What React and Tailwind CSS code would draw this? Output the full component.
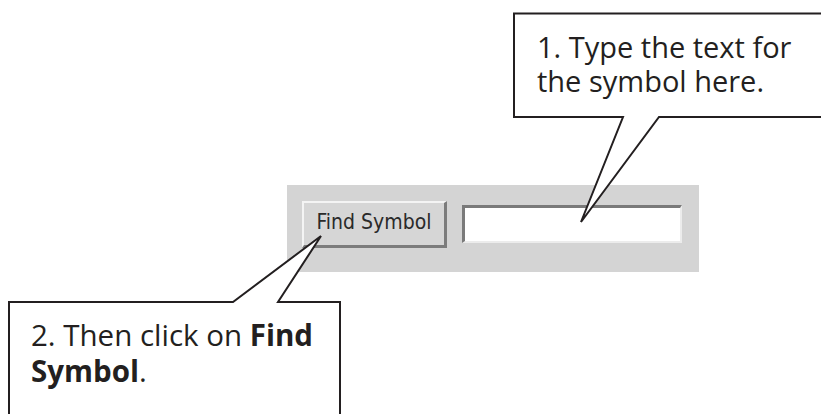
export default function App() {
  return (
    <div className="relative w-[821px] h-[414px] overflow-hidden bg-white">
      {/* toolbar strip */}
      <div className="ml-[287px] pt-[185px]">
        <div className="flex items-start w-[412px] h-[87px] bg-[#d4d4d4] pl-[15px] pt-[16px]">
          <div className="flex items-center justify-center w-[145px] h-[47px] bg-[#d6d6d6] border-t-2 border-l-2 border-b-[3px] border-r-[3px] border-t-[#f4f4f4] border-l-[#f4f4f4] border-b-[#7c7c7c] border-r-[#7c7c7c] pb-[2px] text-[21px] text-[#2a2a2a] font-['DejaVu_Sans_Condensed','Liberation_Sans',sans-serif]">
            Find Symbol
          </div>
          <div className="ml-[15px] mt-[4px] w-[220px] h-[38px] bg-white border-t-[3px] border-l-[3px] border-b-2 border-r-2 border-t-[#7a7a7a] border-l-[#7a7a7a] border-b-[#ececec] border-r-[#ececec]" />
        </div>
      </div>

      {/* callout outlines */}
      <svg className="absolute inset-0" width="821" height="414" viewBox="0 0 821 414">
        <path
          d="M659 117 L830 117 L830 13.5 L514 13.5 L514 117 L623 117 L581 222 Z"
          fill="white"
          stroke="#231f20"
          strokeWidth="2"
          strokeLinejoin="miter"
        />
        <path
          d="M233 302 L9 302 L9 430 L340 430 L340 302 L278 302 L321 236 Z"
          fill="white"
          stroke="#231f20"
          strokeWidth="2"
          strokeLinejoin="miter"
        />
      </svg>

      <div className="absolute left-[537px] top-[30px] text-[29px] leading-[34px] text-[#231f20] font-['Open_Sans',sans-serif]">
        <p>1. Type the text for</p>
        <p>the symbol here.</p>
      </div>

      <div className="absolute left-[31px] top-[317px] text-[29.5px] leading-[36px] text-[#231f20] font-['Open_Sans',sans-serif]">
        <p>2. Then click on <span className="font-bold">Find</span></p>
        <p><span className="font-bold">Symbol</span>.</p>
      </div>
    </div>
  );
}
